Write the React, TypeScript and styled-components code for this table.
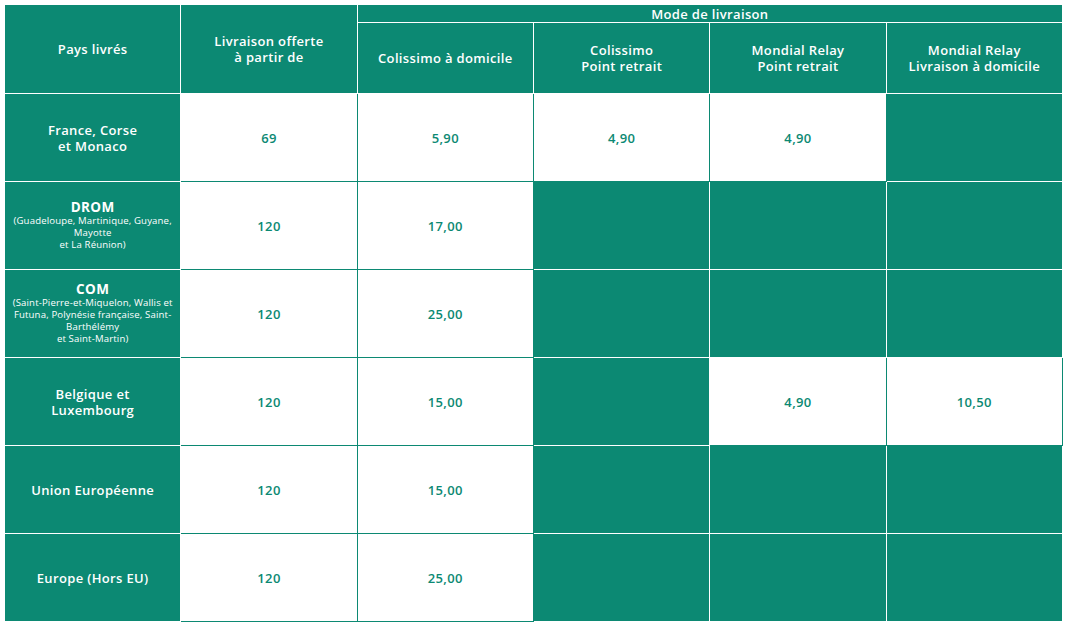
import React from "react";
import styled, { createGlobalStyle } from "styled-components";

const TEAL = "#0c8973";

const Global = createGlobalStyle`
  html, body { margin: 0; padding: 0; background: #ffffff; }
  body { font-family: "Open Sans", "DejaVu Sans", sans-serif; }
`;

const Page = styled.div`
  padding: 5px 6px 5px 5px;
`;

const Table = styled.div`
  display: grid;
  width: 1058px;
  grid-template-columns: repeat(6, 1fr);
  grid-template-rows: 18px 71px repeat(6, 88px);
`;

const Cell = styled.div<{ $tone: "teal" | "white"; $col?: string; $row?: string }>`
  box-sizing: border-box;
  display: flex;
  flex-direction: column;
  align-items: center;
  justify-content: center;
  text-align: center;
  background: ${(p) => (p.$tone === "teal" ? TEAL : "#ffffff")};
  color: ${(p) => (p.$tone === "teal" ? "#ffffff" : TEAL)};
  border-right: 1px solid ${(p) => (p.$tone === "teal" ? "#ffffff" : TEAL)};
  border-bottom: 1px solid ${(p) => (p.$tone === "teal" ? "#ffffff" : TEAL)};
  grid-column: ${(p) => p.$col ?? "auto"};
  grid-row: ${(p) => p.$row ?? "auto"};
  font-size: 13px;
  font-weight: 600;
  line-height: 16px;
  letter-spacing: 0.35px;
  overflow: hidden;
`;

const GroupTitle = styled.span`
  font-size: 13px;
  line-height: 16px;
`;

const CountryName = styled.span`
  font-size: 13.5px;
  line-height: 15px;
  font-weight: 700;
`;

const Detail = styled.span`
  font-size: 9.6px;
  line-height: 12px;
  font-weight: 400;
  letter-spacing: 0.15px;
  white-space: nowrap;
`;

type Row = {
  name: React.ReactNode;
  free: string;
  prices: (string | null)[];
};

const rows: Row[] = [
  {
    name: (
      <>
        France, Corse
        <br />
        et Monaco
      </>
    ),
    free: "69",
    prices: ["5,90", "4,90", "4,90", null],
  },
  {
    name: (
      <>
        <CountryName>DROM</CountryName>
        <Detail>
          (Guadeloupe, Martinique, Guyane,
          <br />
          Mayotte
          <br />
          et La Réunion)
        </Detail>
      </>
    ),
    free: "120",
    prices: ["17,00", null, null, null],
  },
  {
    name: (
      <>
        <CountryName>COM</CountryName>
        <Detail>
          (Saint-Pierre-et-Miquelon, Wallis et
          <br />
          Futuna, Polynésie française, Saint-
          <br />
          Barthélémy
          <br />
          et Saint-Martin)
        </Detail>
      </>
    ),
    free: "120",
    prices: ["25,00", null, null, null],
  },
  {
    name: (
      <>
        Belgique et
        <br />
        Luxembourg
      </>
    ),
    free: "120",
    prices: ["15,00", null, "4,90", "10,50"],
  },
  { name: "Union Européenne", free: "120", prices: ["15,00", null, null, null] },
  { name: "Europe (Hors EU)", free: "120", prices: ["25,00", null, null, null] },
];

export default function App() {
  return (
    <>
      <Global />
      <Page>
        <Table>
          <Cell $tone="teal" $col="1" $row="1 / span 2">
            Pays livrés
          </Cell>
          <Cell $tone="teal" $col="2" $row="1 / span 2">
            Livraison offerte
            <br />à partir de
          </Cell>
          <Cell $tone="teal" $col="3 / span 4" $row="1">
            <GroupTitle>Mode de livraison</GroupTitle>
          </Cell>
          <Cell $tone="teal">Colissimo à domicile</Cell>
          <Cell $tone="teal">
            Colissimo
            <br />
            Point retrait
          </Cell>
          <Cell $tone="teal">
            Mondial Relay
            <br />
            Point retrait
          </Cell>
          <Cell $tone="teal">
            Mondial Relay
            <br />
            Livraison à domicile
          </Cell>
          {rows.map((r, i) => (
            <React.Fragment key={i}>
              <Cell $tone="teal">{r.name}</Cell>
              <Cell $tone="white">{r.free}</Cell>
              {r.prices.map((p, j) =>
                p ? (
                  <Cell key={j} $tone="white">
                    {p}
                  </Cell>
                ) : (
                  <Cell key={j} $tone="teal" />
                )
              )}
            </React.Fragment>
          ))}
        </Table>
      </Page>
    </>
  );
}
